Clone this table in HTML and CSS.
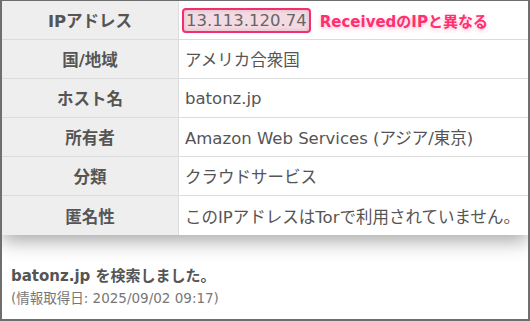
FILE: index.html
```html
<!DOCTYPE html>
<html lang="ja">
<head>
<meta charset="utf-8">
<link rel="stylesheet" href="styles.css">
</head>
<body>
<div class="frame">
  <div class="table">
    <div class="row">
      <div class="label">IPアドレス</div>
      <div class="value"><span class="ip">13.113.120.74</span><span class="note">ReceivedのIPと異なる</span></div>
    </div>
    <div class="row">
      <div class="label">国/地域</div>
      <div class="value">アメリカ合衆国</div>
    </div>
    <div class="row">
      <div class="label">ホスト名</div>
      <div class="value">batonz.jp</div>
    </div>
    <div class="row">
      <div class="label">所有者</div>
      <div class="value">Amazon Web Services (アジア/東京)</div>
    </div>
    <div class="row">
      <div class="label">分類</div>
      <div class="value">クラウドサービス</div>
    </div>
    <div class="row last">
      <div class="label">匿名性</div>
      <div class="value">このIPアドレスはTorで利用されていません。</div>
    </div>
  </div>
  <div class="footer">
    <div class="searched">batonz.jp を検索しました。</div>
    <div class="date">(情報取得日: 2025/09/02 09:17)</div>
  </div>
</div>
</body>
</html>
```
FILE: styles.css
```css
html, body {
  margin: 0;
  padding: 0;
  background: #fff;
}
.frame {
  width: 530px;
  height: 321px;
  box-sizing: border-box;
  border: 2px solid #6e6e6e;
  border-top-width: 1px;
  overflow: hidden;
  font-family: "DejaVu Sans", "Noto Sans CJK JP", sans-serif;
  color: #555;
  background: #fff;
}
.table {
  box-shadow: 0 6px 18px rgba(0, 0, 0, 0.35);
  position: relative;
  background: #fff;
}
.row {
  display: grid;
  grid-template-columns: 177px 1fr;
  height: 38px;
  border-bottom: 1px solid #dcdcdc;
}
.row.last {
  border-bottom: none;
  height: 39px;
}
.label {
  background: #eeeeee;
  border-right: 1px solid #dcdcdc;
  display: flex;
  align-items: center;
  justify-content: center;
  font-weight: bold;
  font-size: 16.5px;
  color: #555;
}
.value {
  display: flex;
  align-items: center;
  padding-left: 6px;
  font-size: 16.5px;
  color: #555;
  white-space: nowrap;
}
.ip {
  display: inline-block;
  border: 2px solid #f0306c;
  border-radius: 4px;
  background: #f4dbe3;
  box-shadow: inset 0 0 4px rgba(180, 60, 100, 0.25);
  padding: 0 2px;
  line-height: 21px;
  color: #666;
  margin-left: -3px;
}
.note {
  color: #ff2f72;
  font-weight: bold;
  font-size: 15px;
  margin-left: 9px;
  text-shadow: 0 2px 4px rgba(255, 50, 110, 0.3);
}
.footer {
  padding: 31px 0 0 9px;
}
.searched {
  font-size: 15px;
  font-weight: bold;
  color: #555;
  line-height: 20px;
}
.date {
  font-size: 13.5px;
  color: #777;
  line-height: 20px;
  margin-top: 2px;
}
```
